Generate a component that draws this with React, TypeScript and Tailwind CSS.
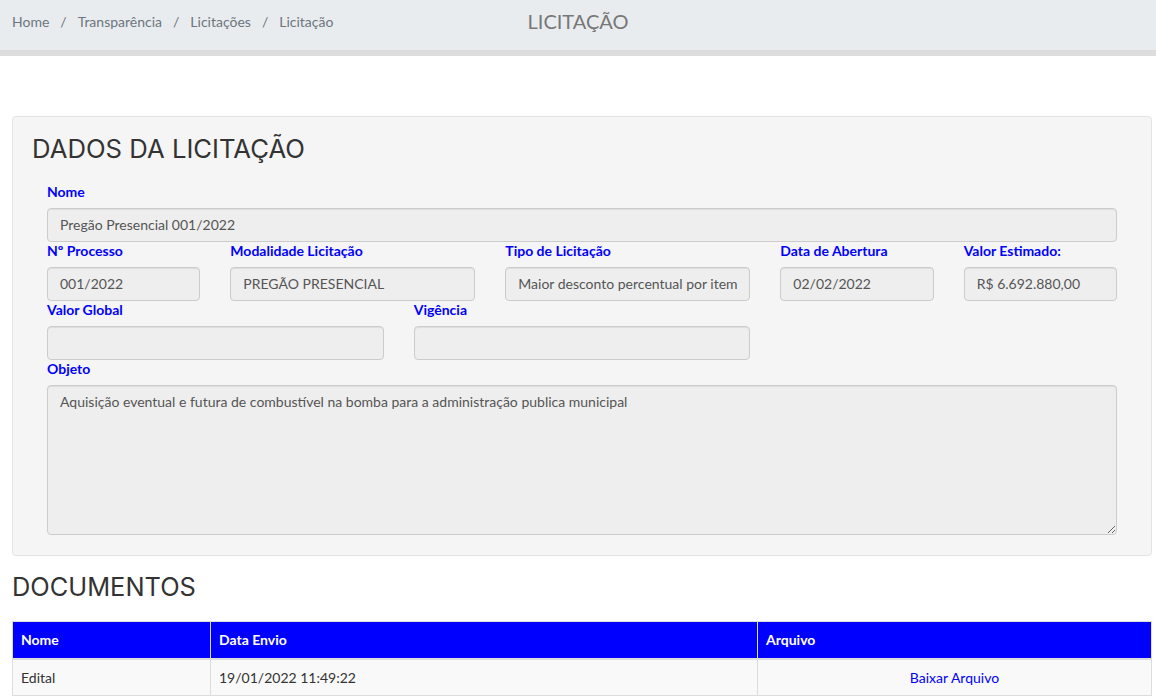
const inputCls =
  "h-[34px] w-full overflow-hidden whitespace-nowrap rounded-[4px] border border-[#cccccc] bg-[#eeeeee] px-3 text-[14px] leading-[32px] text-[#555555] shadow-[inset_0_1px_1px_rgba(0,0,0,0.075)]";

function Field({ label, value, span }: { label: string; value: string; span: string }) {
  return (
    <div className={`${span} px-[15px]`}>
      <div className="h-[18px] text-[14px] font-bold leading-[18px] text-[#0000ff]">{label}</div>
      <div className="pt-[7px]">
        <div className={inputCls}>{value}</div>
      </div>
    </div>
  );
}

export default function App() {
  const docs = [{ nome: "Edital", data: "19/01/2022 11:49:22" }];

  return (
    <div className="min-h-[699px] bg-white font-['Lato','Open_Sans',sans-serif] text-[14px] text-[#333333]">
      <div className="grid h-[56px] grid-cols-[1fr_auto_1fr] items-start border-b-[6px] border-[#dddddd] bg-[#e9ecef]">
        <div className="flex h-[43px] items-center gap-[11px] pl-3 text-[14px] text-[#6c757d]">
          <span>Home</span>
          <span>/</span>
          <span>Transparência</span>
          <span>/</span>
          <span>Licitações</span>
          <span>/</span>
          <span>Licitação</span>
        </div>
        <div className="flex h-[42px] items-center text-[20px] text-[#777777]">LICITAÇÃO</div>
        <div />
      </div>

      <div className="pl-3 pr-1 pt-[60px]">
        <div className="rounded-[4px] border border-[#e3e3e3] bg-[#f5f5f5] px-[19px] pb-5 pt-[16px]">
          <h2 className="h-[50px] font-['Inter',sans-serif] text-[25.7px] leading-[32px] text-[#333333]">
            DADOS DA LICITAÇÃO
          </h2>
          <div className="flex flex-col">
            <div className="flex">
              <Field span="w-full" label="Nome" value="Pregão Presencial 001/2022" />
            </div>
            <div className="flex">
              <Field span="w-2/12" label="Nº Processo" value="001/2022" />
              <Field span="w-3/12" label="Modalidade Licitação" value="PREGÃO PRESENCIAL" />
              <Field span="w-3/12" label="Tipo de Licitação" value="Maior desconto percentual por item" />
              <Field span="w-2/12" label="Data de Abertura" value="02/02/2022" />
              <Field span="w-2/12" label="Valor Estimado:" value="R$ 6.692.880,00" />
            </div>
            <div className="flex">
              <Field span="w-4/12" label="Valor Global" value="" />
              <Field span="w-4/12" label="Vigência" value="" />
            </div>
            <div className="px-[15px]">
              <div className="h-[18px] text-[14px] font-bold leading-[18px] text-[#0000ff]">Objeto</div>
              <div className="pt-[7px]">
                <textarea
                  readOnly
                  className="block h-[150px] w-full resize-y rounded-[4px] border border-[#cccccc] bg-[#eeeeee] px-3 py-[6px] text-[14px] leading-[20px] text-[#555555] shadow-[inset_0_1px_1px_rgba(0,0,0,0.075)] outline-none"
                  value="Aquisição eventual e futura de combustível na bomba para a administração publica municipal"
                />
              </div>
            </div>
          </div>
        </div>

        <h2 className="mt-[16px] h-[44px] font-['Inter',sans-serif] text-[25.4px] leading-[30px] text-[#333333]">
          DOCUMENTOS
        </h2>
        <table className="mt-[5px] w-full border-collapse border border-[#dddddd] text-[14px]">
          <thead>
            <tr className="bg-[#0000ff] text-white">
              <th className="h-[37px] w-[198px] border border-b-2 border-[#dddddd] px-2 text-left font-bold">Nome</th>
              <th className="w-[547px] border border-b-2 border-[#dddddd] px-2 text-left font-bold">Data Envio</th>
              <th className="border border-b-2 border-[#dddddd] px-2 text-left font-bold">Arquivo</th>
            </tr>
          </thead>
          <tbody>
            {docs.map((d) => (
              <tr key={d.nome} className="bg-[#f9f9f9]">
                <td className="h-[37px] border border-[#dddddd] px-2">{d.nome}</td>
                <td className="border border-[#dddddd] px-2">{d.data}</td>
                <td className="border border-[#dddddd] px-2 text-center">
                  <a className="text-[#0000ff]" href="#">Baixar Arquivo</a>
                </td>
              </tr>
            ))}
          </tbody>
        </table>
      </div>
    </div>
  );
}
